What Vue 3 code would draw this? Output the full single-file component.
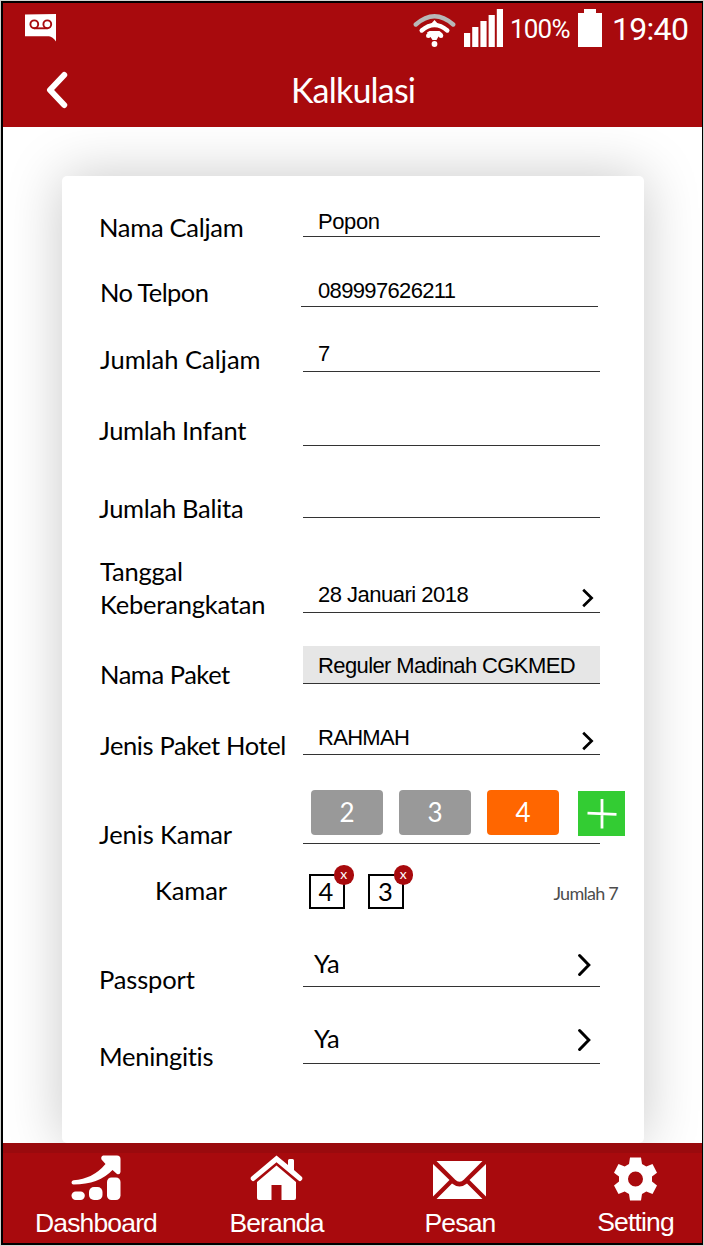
<script setup>
const rows = [
  { key: 'nama', label: 'Nama Caljam', value: 'Popon' },
  { key: 'telpon', label: 'No Telpon', value: '089997626211' },
  { key: 'caljam', label: 'Jumlah Caljam', value: '7' },
  { key: 'infant', label: 'Jumlah Infant', value: '' },
  { key: 'balita', label: 'Jumlah Balita', value: '' },
  { key: 'tanggal', label: 'Tanggal Keberangkatan', value: '28 Januari 2018', pick: true },
  { key: 'paket', label: 'Nama Paket', value: 'Reguler Madinah CGKMED' },
  { key: 'hotel', label: 'Jenis Paket Hotel', value: 'RAHMAH', pick: true },
]
const extras = [
  { key: 'passport', label: 'Passport', value: 'Ya', pick: true },
  { key: 'meningitis', label: 'Meningitis', value: 'Ya', pick: true },
]
const types = [2, 3, 4]
const selected = 4
const rooms = [4, 3]
</script>

<template>
  <div class="frame">
    <div class="screen">
      <header class="top">
        <div class="status">
          <svg class="voicemail" width="31" height="28" viewBox="0 0 31 28">
            <path d="M0 .6 31 0V27.500Q27.500 22.600 24 22.300H0Z" fill="#fff" />
            <g fill="none" stroke="#a80a0d" stroke-width="1.900">
              <circle cx="9.300" cy="10.300" r="3.900" />
              <circle cx="22.300" cy="10.300" r="3.900" />
              <path d="M9.300 14.300H22.300" />
            </g>
          </svg>
          <svg class="wifi" width="43" height="42" viewBox="0 0 43 42">
            <g fill="none" stroke-linecap="round">
              <path d="M2.800 18.500Q21.500 2 40.200 18.500" stroke="#b8b8b8" stroke-width="4.400" />
              <path d="M8.700 24.500Q21.500 13.500 34.300 24.500" stroke="#fff" stroke-width="4.400" />
            </g>
            <path d="M21.500 14 26 19H17Z" fill="#fff" />
            <path d="M14 26.500 16.500 25H26.500L29.500 27.500 28 31.500 25.500 30.500 23.500 34H19.500L17.500 31 15.500 31.500Z" fill="#fff" />
            <circle cx="15.300" cy="29.800" r="2.300" fill="#fff" />
            <circle cx="28" cy="29.800" r="2.300" fill="#fff" />
            <circle cx="21.500" cy="38" r="2.900" fill="#fff" />
          </svg>
          <svg class="signal" width="40" height="39" viewBox="0 0 40 39" fill="#fff">
            <path d="M0 24H6.200V38H0ZM8.200 18H14.400V38H8.200ZM16.400 12H22.600V38H16.400ZM24.600 6H30.800V38H24.600ZM32.800 0H39V38H32.800Z" />
          </svg>
          <span class="percent">100%</span>
          <svg class="battery" width="24" height="38" viewBox="0 0 24 38">
            <path d="M6 0H18V4H24V38H0V4H6Z" fill="#fff" />
          </svg>
          <span class="clock">19:40</span>
        </div>
        <div class="bar">
          <svg class="back" width="22" height="38" viewBox="0 0 22 38">
            <path d="M18.200 4 4 19 18.200 34" fill="none" stroke="#fff" stroke-width="6" stroke-linecap="round" stroke-linejoin="round" />
          </svg>
          <h1 class="title">Kalkulasi</h1>
        </div>
      </header>

      <main class="body">
        <section class="card">
          <div v-for="r in rows" :key="r.key" class="row" :class="r.key">
            <label class="label">{{ r.label }}</label>
            <div class="field">
              <span class="value">{{ r.value }}</span>
              <svg v-if="r.pick" class="chev" width="12" height="20" viewBox="0 0 12 20">
                <path d="M1.200 1.800 9.600 10 1.200 18.200" fill="none" stroke="#000" stroke-width="2.700" />
              </svg>
            </div>
          </div>

          <div class="row kamar-type">
            <label class="label">Jenis Kamar</label>
            <div class="field">
              <button v-for="t in types" :key="t" class="type" :class="{ on: t === selected }">{{ t }}</button>
              <button class="add" aria-label="Tambah">
                <svg width="30" height="30" viewBox="0 0 30 30">
                  <path d="M15 0V29.500M.5 14.200 29.500 15.300" stroke="#fff" stroke-width="2.800" />
                </svg>
              </button>
            </div>
          </div>

          <div class="row rooms">
            <label class="label">Kamar</label>
            <div class="list">
              <span v-for="n in rooms" :key="n" class="room">{{ n }}<b class="x">x</b></span>
              <span class="total">Jumlah 7</span>
            </div>
          </div>

          <div v-for="r in extras" :key="r.key" class="row extra" :class="r.key">
            <label class="label">{{ r.label }}</label>
            <div class="field">
              <span class="value">{{ r.value }}</span>
              <svg class="chev" width="14" height="24" viewBox="0 0 14 24">
                <path d="M1.600 2.500 10.800 12 1.600 21.500" fill="none" stroke="#000" stroke-width="3" stroke-linecap="round" />
              </svg>
            </div>
          </div>
        </section>
      </main>

      <nav class="nav">
        <a class="item dashboard">
          <svg width="50" height="46" viewBox="0 0 50 46" fill="#fff">
            <path d="M32 .5H46Q49.500.500 49.500 4V17Q49 20 46 19L41.500 15Q28 29.500 2.500 29.500Q.500 29.500.500 27.500Q.500 25.400 2.500 25.200Q22 24 34.500 9L30.500 4.500Q29.500 1.500 32 .5Z" />
            <rect x=".5" y="36.500" width="13.300" height="8.500" rx="4.200" />
            <rect x="18" y="32" width="13.500" height="13" rx="5" />
            <rect x="36" y="22.500" width="13.500" height="22.500" rx="4.500" />
          </svg>
          <span>Dashboard</span>
        </a>
        <a class="item beranda">
          <svg width="53" height="46" viewBox="0 0 53 46" fill="#fff">
            <path d="M26.500 10.500 46 27V43Q46 45 44 45H31.500V30H21.500V45H9Q7 45 7 43V27Z" />
            <path d="M26.500.500 38 10V5.500Q38 4 39.500 4H42.500Q44 4 44 5.500V15L52 22Q53 24 51.500 25.300Q50 27 48.500 25.500L26.500 7.300 4.500 25.500Q3 27 1.500 25.300Q0 24 1 22Z" />
          </svg>
          <span>Beranda</span>
        </a>
        <a class="item pesan">
          <svg width="53" height="46" viewBox="0 0 53 46" fill="#fff">
            <path d="M3.500 6H49.500L31 24.500Q26.500 29 22 24.500Z" />
            <path d="M0 9V41.500L16.500 25ZM53 9V41.500L36.500 25ZM3.500 44 19 28.500Q26.500 34.500 34 28.500L49.500 44Z" />
          </svg>
          <span>Pesan</span>
        </a>
        <a class="item setting">
          <svg width="53" height="46" viewBox="0 0 53 46" fill="#fff">
            <path fill-rule="evenodd" d="M21 2.500H32L33 9L37.300 11.500 43.500 9 48 17.800 43 21.500V26.500L48 30.500 43.500 39 37.300 36.500 33 39 32 45.500H21L20 39 15.700 36.500 9.500 39 5 30.500 10 26.500V21.500L5 17.800 9.500 9 15.700 11.500 20 9ZM26.500 16.500A7.500 7.500 0 1 0 26.500 31.500A7.500 7.500 0 1 0 26.500 16.500Z" />
          </svg>
          <span>Setting</span>
        </a>
      </nav>
    </div>
  </div>
</template>

<style>
body {
  background: #d3d6d3;
}
</style>

<style scoped>
* {
  box-sizing: border-box;
}
.frame {
  width: 704px;
  height: 1246px;
  padding: 1px;
  font-family: Lato, "Open Sans", sans-serif;
  font-variant-ligatures: none;
  color: #000;
}
.screen {
  width: 702px;
  height: 1244px;
  border: 2px solid #000;
  border-right-width: 1px;
  background: #fff;
  display: flex;
  flex-direction: column;
  overflow: hidden;
}
.top {
  position: relative;
  z-index: 1;
  flex: none;
  height: 124px;
  background: #a80a0d;
  color: #fff;
}
.status {
  display: flex;
  align-items: flex-start;
  height: 57px;
  padding-left: 22px;
}
.status svg {
  flex: none;
}
.voicemail {
  margin-top: 11px;
}
.wifi {
  margin: 3px 0 0 357px;
}
.signal {
  margin: 6px 0 0 8px;
}
.percent,
.clock {
  font-family: Roboto, sans-serif;
  white-space: nowrap;
}
.percent {
  width: 62px;
  margin: 10px 0 0 6px;
  font-size: 26px;
  line-height: 32px;
  letter-spacing: -0.8px;
}
.battery {
  margin: 6px 0 0 6px;
}
.clock {
  margin: 7px 0 0 10px;
  font-size: 32px;
  line-height: 38px;
  letter-spacing: -0.7px;
}
.bar {
  display: flex;
  align-items: center;
  height: 60px;
  padding-left: 43px;
}
.title {
  margin: 0 0 0 223px;
  font-size: 34px;
  line-height: 42px;
  font-weight: 400;
  letter-spacing: -0.8px;
}
.body {
  flex: 1;
  min-height: 0;
  padding: 49px 0 0 59px;
}
.card {
  width: 582px;
  height: 967px;
  padding-left: 37px;
  border-radius: 5px;
  background: #fff;
  box-shadow: 0 0 56px rgba(0, 0, 0, 0.22);
}
.row {
  display: flex;
  align-items: flex-end;
  height: 71px;
}
.label {
  flex: none;
  width: 204px;
  margin-bottom: -7px;
  font-size: 25.5px;
  line-height: 33px;
  letter-spacing: -0.28px;
}
.field {
  display: flex;
  align-items: flex-end;
  justify-content: space-between;
  width: 296.5px;
  height: 37px;
  padding: 0 5.5px 0 15px;
  border-bottom: 1px solid #333;
}
.value {
  margin-bottom: 2px;
  font-family: "Liberation Sans", Arial, sans-serif;
  font-size: 22px;
  line-height: 24px;
  letter-spacing: -0.6px;
  white-space: nowrap;
}
.chev {
  flex: none;
  margin-bottom: 4px;
}
.nama {
  height: 61px;
}
.nama .value {
  letter-spacing: -0.4px;
}
.telpon {
  height: 70px;
}
.telpon .label {
  width: 202px;
  padding-left: 1px;
  margin-bottom: -2px;
  letter-spacing: -0.6px;
}
.telpon .field {
  padding-left: 17px;
}
.telpon .value {
  margin-bottom: 3px;
  letter-spacing: -0.65px;
}
.caljam {
  height: 65px;
}
.caljam .label {
  padding-left: 1px;
  margin-bottom: -4px;
  letter-spacing: 0;
}
.caljam .value {
  margin-bottom: 5px;
}
.infant {
  height: 74px;
}
.infant .label {
  margin-bottom: -1px;
}
.balita {
  height: 72px;
}
.tanggal {
  height: 95px;
}
.tanggal .label {
  padding: 0 30px 0 1px;
  margin-bottom: -8px;
  letter-spacing: -0.2px;
}
.tanggal .value {
  margin-bottom: 5px;
  letter-spacing: -0.5px;
}
.paket .label {
  padding-left: 1px;
  letter-spacing: -0.45px;
}
.paket .value {
  margin-bottom: 5px;
}
.paket .field {
  height: 38px;
  background: #e6e6e6;
}
.hotel .label {
  padding-left: 1px;
  letter-spacing: -0.38px;
}
.hotel .value {
  margin-bottom: 4px;
  letter-spacing: -0.7px;
}
.hotel .chev {
  margin-bottom: 3px;
}
.kamar-type {
  height: 89px;
}
.kamar-type .label {
  letter-spacing: -0.1px;
}
.kamar-type .field {
  flex: none;
  justify-content: flex-start;
  align-items: flex-start;
  height: 54px;
  padding: 0 0 0 8px;
}
.type,
.add {
  flex: none;
  border: 0;
  padding: 0;
  color: #fff;
}
.type {
  width: 72px;
  height: 45px;
  margin-right: 16px;
  border-radius: 4px;
  background: #999;
  font: 26px/45px Lato, sans-serif;
}
.type.on {
  background: #f60;
}
.add {
  display: grid;
  place-items: center;
  width: 47px;
  height: 45px;
  margin: 1px 0 0 3px;
  background: #3c3;
}
.rooms {
  height: 76px;
  align-items: flex-start;
}
.rooms .label {
  width: 209.5px;
  padding-left: 56px;
  margin: 30px 0 0;
  letter-spacing: -0.1px;
}
.list {
  display: flex;
  align-items: flex-start;
  padding-top: 29.5px;
}
.room {
  position: relative;
  width: 36px;
  height: 35px;
  margin-right: 23.5px;
  border: 2px solid #000;
  font-size: 25.5px;
  line-height: 31px;
  text-align: center;
  text-indent: -1px;
}
.x {
  position: absolute;
  top: -10.5px;
  right: -11px;
  width: 19.5px;
  height: 19.5px;
  border-radius: 50%;
  background: #a80a0d;
  color: #fff;
  font-size: 14px;
  line-height: 18px;
  font-weight: 400;
  text-indent: 0;
}
.total {
  margin: 7.5px 0 0 126px;
  color: #4d4d4d;
  font-size: 18px;
  line-height: 24px;
  letter-spacing: -0.75px;
}
.passport {
  height: 67px;
}
.passport .label {
  letter-spacing: -0.15px;
}
.meningitis {
  height: 77px;
}
.extra .label {
  margin-bottom: -9px;
}
.extra .field {
  padding: 0 8px 0 11px;
}
.extra .value {
  margin-bottom: 6px;
  font-family: Lato, sans-serif;
  font-size: 25.5px;
  line-height: 33px;
  letter-spacing: 0;
}
.extra .chev {
  margin-bottom: 9px;
}
.meningitis .value {
  margin-bottom: 8px;
}
.meningitis .chev {
  margin-bottom: 11px;
}
.nav {
  position: relative;
  z-index: 1;
  flex: none;
  display: grid;
  grid-template-columns: 186px 177px 188px 148px;
  height: 100px;
  background: linear-gradient(#9a0a0d 10px, #a80a0d 10px);
  color: #fff;
}
.item {
  display: flex;
  flex-direction: column;
  align-items: center;
  padding-top: 12px;
  font-family: "Liberation Sans", Arial, sans-serif;
  font-size: 26.5px;
  line-height: 30px;
  letter-spacing: -0.85px;
}
.item span {
  margin-top: 7px;
}
.beranda {
  padding-right: 2px;
}
.pesan {
  padding-right: 2px;
}
.pesan span {
  margin-left: 2px;
}
.setting {
  padding-left: 15px;
}
.setting span {
  margin-top: 6px;
}
</style>
